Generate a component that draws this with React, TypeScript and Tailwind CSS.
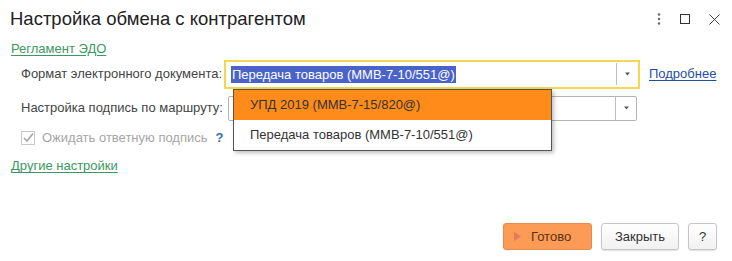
import React from 'react';

const font = { fontFamily: '"Liberation Sans", Arial, sans-serif' };

function DropArrow() {
  return (
    <svg width="7" height="4" viewBox="0 0 7 4">
      <path d="M1 0.5 L6 0.5 L3.5 3.5 Z" fill="#555" />
    </svg>
  );
}

function Check() {
  return (
    <div className="w-[14px] h-[14px] border border-[#c8c8c8] bg-white flex items-center justify-center">
      <svg width="12" height="12" viewBox="0 0 12 12">
        <path d="M2 6 L5 9 L11 1.5" stroke="#a6a6a6" strokeWidth="1.6" fill="none" />
      </svg>
    </div>
  );
}

export default function App() {
  return (
    <div className="relative w-[732px] h-[261px] bg-white text-[13px] text-[#333] overflow-hidden" style={font}>
      {/* header */}
      <div className="flex items-center h-[36px] pl-[10px] pr-[12px]">
        <div className="text-[18.5px] leading-[21px] text-[#222] pt-[1px]">Настройка обмена с контрагентом</div>
        <div className="ml-auto flex items-center gap-[19px] pt-[2px]">
          <svg width="4" height="12" viewBox="0 0 4 12">
            <circle cx="2" cy="1.5" r="1.2" fill="#666" />
            <circle cx="2" cy="6" r="1.2" fill="#666" />
            <circle cx="2" cy="10.5" r="1.2" fill="#666" />
          </svg>
          <div className="w-[10px] h-[10px] border border-[#333]" />
          <svg width="11" height="11" viewBox="0 0 11 11">
            <path d="M0.5 0.5 L10.5 10.5 M10.5 0.5 L0.5 10.5" stroke="#444" strokeWidth="1" />
          </svg>
        </div>
      </div>

      <div className="pl-[11px] h-[22px] flex items-center pt-[3px]">
        <span className="text-[#3a9960] underline underline-offset-2 decoration-[#3a9960]">Регламент ЭДО</span>
      </div>

      {/* row 1 */}
      <div className="flex items-center h-[30px] mt-[1px]">
        <div className="pl-[21px] w-[224px] text-[#444]">Формат электронного документа:</div>
        <div className="w-[416px] h-[29px] border-2 border-[#f2d84e] flex items-center bg-white">
          <div className="flex-1 h-full flex items-center pl-[5px]">
            <span className="bg-[#4a63c9] text-white leading-[17px] px-[1px]">Передача товаров (ММВ-7-10/551@)</span>
          </div>
          <div className="w-px h-[22px] bg-[#bdbdbd]" />
          <div className="w-[21px] flex justify-center"><DropArrow /></div>
        </div>
        <span className="ml-[9px] text-[#1f4fa0] underline underline-offset-2">Подробнее</span>
      </div>

      {/* row 2 */}
      <div className="flex items-center h-[26px] mt-[6px]">
        <div className="pl-[21px] w-[228px] text-[#444]">Настройка подпись по маршруту:</div>
        <div className="w-[409px] h-[25px] border border-[#b4b4b4] rounded-[2px] flex items-center bg-white">
          <div className="flex-1" />
          <div className="w-px h-full bg-[#bdbdbd]" />
          <div className="w-[20px] flex justify-center"><DropArrow /></div>
        </div>
      </div>

      {/* checkbox */}
      <div className="flex items-center h-[24px] mt-[5px] pl-[21px] gap-[7px]">
        <Check />
        <span className="text-[#a6a6a6]">Ожидать ответную подпись</span>
        <span className="text-[#2f6fb8] font-bold ml-[1px]">?</span>
      </div>

      <div className="pl-[11px] h-[22px] flex items-center mt-[5px]">
        <span className="text-[#3a9960] underline underline-offset-2 decoration-[#3a9960]">Другие настройки</span>
      </div>

      {/* footer buttons */}
      <div className="absolute left-0 right-0 top-[223px] flex justify-end pr-[15px] gap-[9px]">
        <div className="w-[89px] h-[27px] rounded-[3px] border border-[#e88a4e] bg-[#fb9b55] flex items-center pl-[10px] gap-[10px]">
          <svg width="7" height="9" viewBox="0 0 7 9"><path d="M0 0 L7 4.5 L0 9 Z" fill="#e07a62" /></svg>
          <span className="text-[#5a3210]">Готово</span>
        </div>
        <div className="w-[78px] h-[27px] rounded-[3px] border border-[#c6c6c6] bg-gradient-to-b from-white to-[#f1f1f1] shadow-[0_1px_1px_rgba(0,0,0,0.12)] flex items-center justify-center text-[#333]">
          Закрыть
        </div>
        <div className="w-[29px] h-[27px] rounded-[3px] border border-[#c6c6c6] bg-gradient-to-b from-white to-[#f1f1f1] shadow-[0_1px_1px_rgba(0,0,0,0.12)] flex items-center justify-center text-[#333]">
          ?
        </div>
      </div>

      {/* dropdown list overlay */}
      <div className="absolute left-[233px] top-[89px] w-[319px] border border-[#555] bg-white shadow-[2px_2px_4px_rgba(0,0,0,0.25)]">
        <div className="h-[30px] bg-[#ff8c1a] flex items-center pl-[16px] text-[#333]">УПД 2019 (ММВ-7-15/820@)</div>
        <div className="h-[30px] flex items-center pl-[16px] text-[#333]">Передача товаров (ММВ-7-10/551@)</div>
      </div>
    </div>
  );
}
